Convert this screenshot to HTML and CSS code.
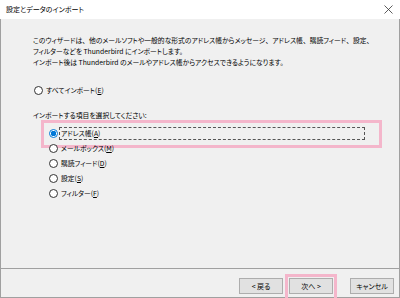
FILE: index.html
```html
<!DOCTYPE html>
<html lang="ja">
<head>
<meta charset="utf-8">
<title>設定とデータのインポート</title>
<link rel="stylesheet" href="styles.css">
</head>
<body>
<div class="window">
  <div class="titlebar">
    <span class="title">設定とデータのインポート</span>
    <svg class="close" width="9" height="9" viewBox="0 0 9 9"><path d="M0.5 0.5L8.5 8.5M8.5 0.5L0.5 8.5" stroke="#333" stroke-width="0.8" fill="none"/></svg>
  </div>
  <div class="frame">
    <div class="content">
      <p class="intro">このウィザードは<span class="punct">、</span>他のメールソフトや一般的な形式のアドレス帳からメッセージ<span class="punct">、</span>アドレス帳<span class="punct">、</span>購読フィード<span class="punct">、</span>設定<span class="punct">、</span><br>フィルターなどを Thunderbird にインポートします。<br>インポート後は Thunderbird のメールやアドレス帳からアクセスできるようになります。</p>
      <div class="radio-row all"><span class="radio"></span><span class="label">すべてインポート(<u>E</u>)</span></div>
      <p class="prompt">インポートする項目を選択してください:</p>
      <div class="options">
        <div class="radio-row item selected">
          <span class="radio checked"></span><span class="label focus">アドレス帳(<u>A</u>)</span>
          <span class="mark mark-row"></span>
        </div>
        <div class="radio-row item"><span class="radio"></span><span class="label">メールボックス(<u>M</u>)</span></div>
        <div class="radio-row item"><span class="radio"></span><span class="label">購読フィード(<u>D</u>)</span></div>
        <div class="radio-row item"><span class="radio"></span><span class="label">設定(<u>S</u>)</span></div>
        <div class="radio-row item"><span class="radio"></span><span class="label">フィルター(<u>F</u>)</span></div>
      </div>
    </div>
    <div class="footer">
      <div class="btn">&lt; 戻る</div>
      <div class="btn next">次へ &gt;<span class="mark mark-btn"></span></div>
      <div class="btn cancel">キャンセル</div>
    </div>
  </div>
</div>
</body>
</html>
```
FILE: styles.css
```css
* { box-sizing: border-box; }
html, body { margin: 0; padding: 0; }
body { background: #f0f0f0; }
.window {
  width: 400px;
  height: 298px;
  display: flex;
  flex-direction: column;
  background: #f0f0f0;
  font-family: "Noto Sans CJK JP", "Noto Sans", sans-serif;
  font-size: 6.8px;
  font-feature-settings: "palt";
  color: #000;
  overflow: hidden;
}
.titlebar {
  height: 19px;
  flex: none;
  background: #fff;
  display: flex;
  align-items: center;
  justify-content: space-between;
  padding: 0 7px 0 6px;
}
.title { font-size: 7px; line-height: 11px; }
.close { display: block; }
.frame {
  flex: 1;
  display: flex;
  flex-direction: column;
  border: 1px solid #a0a0a0;
  border-top: 0;
}
.content {
  flex: 1;
  padding: 16px 0 0 32px;
}
.intro { margin: 0; line-height: 11px; white-space: nowrap; }
.punct { font-feature-settings: normal; }
.radio-row { display: flex; align-items: center; }
.radio {
  width: 9px;
  height: 9px;
  flex: none;
  border: 1px solid #333;
  border-radius: 50%;
  background: #fff;
}
.radio.checked {
  border-color: #0078d7;
  background: radial-gradient(circle, #0078d7 0 2.6px, #fff 3px);
}
.all { height: 12px; margin-top: 16px; margin-left: 1px; }
.all .label { margin-left: 3px; }
.prompt { margin: 14px 0 0; line-height: 11px; }
.options { margin-top: 4.5px; padding-left: 16px; }
.item { height: 15px; position: relative; }
.item .label { margin-left: 3px; line-height: 11px; }
.focus {
  width: 306px;
  height: 13px;
  border: 1px dashed #555;
  padding-left: 1px;
  margin-left: 1px !important;
  display: flex;
  align-items: center;
}
.mark {
  position: absolute;
  border: 3px solid #f4b6cb;
  pointer-events: none;
}
.mark-row { left: -8px; right: 17px; top: -5.5px; bottom: -7.5px; }
.footer {
  height: 29px;
  flex: none;
  border-top: 1px solid #a0a0a0;
  display: flex;
  justify-content: flex-end;
  align-items: flex-start;
  padding: 9px 5px 0 0;
}
.btn {
  position: relative;
  width: 44px;
  height: 16px;
  background: #e1e1e1;
  border: 1px solid #adadad;
  display: flex;
  align-items: center;
  justify-content: center;
  font-size: 7px;
}
.next { margin-left: 6px; }
.cancel { margin-left: 17px; }
.mark-btn { left: -5px; right: -5px; top: -5px; bottom: -8px; }
```
